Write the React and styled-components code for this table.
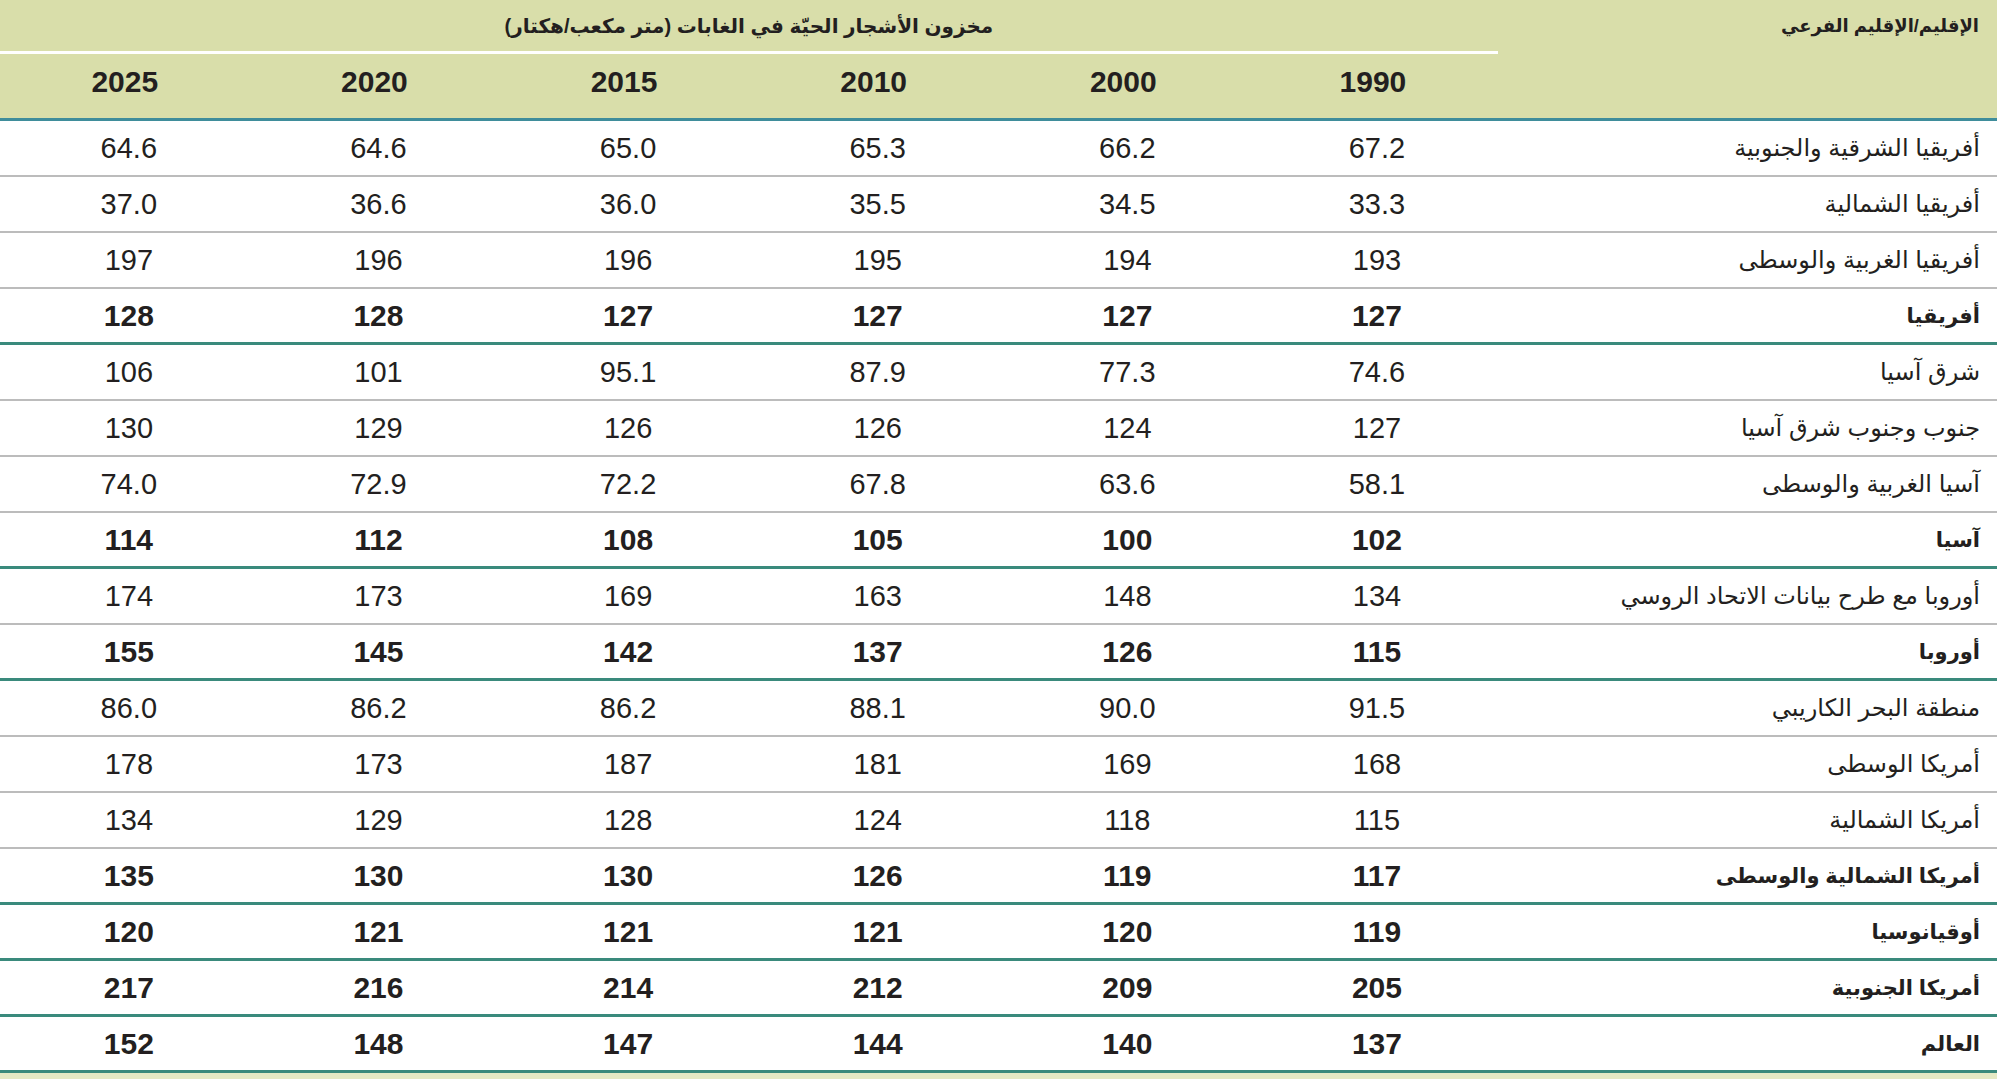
import React from 'react';
import styled, { createGlobalStyle } from 'styled-components';

const GlobalStyle = createGlobalStyle`
  html, body {
    margin: 0;
    padding: 0;
    background: #ffffff;
  }
  body {
    font-family: "Liberation Sans", "DejaVu Sans", Arial, sans-serif;
    color: #231f20;
    overflow: hidden;
  }
`;

const cols = '2fr repeat(6, 1fr)';

const Page = styled.div`
  width: 1997px;
  height: 1079px;
  display: flex;
  flex-direction: column;
  direction: rtl;
  background: #e4e9c4;
`;

const Head = styled.div`
  display: grid;
  grid-template-columns: ${cols};
  grid-template-rows: 54px 64px;
  background: #d9deaa;
  border-bottom: 3px solid #3f8d9b;
`;

const RegionTitle = styled.div`
  grid-row: 1;
  grid-column: 1;
  display: flex;
  align-items: center;
  padding-right: 18px;
  padding-bottom: 3px;
  font-size: 18px;
  font-weight: bold;
`;

const GroupTitle = styled.div`
  grid-row: 1;
  grid-column: 2 / span 6;
  display: flex;
  align-items: center;
  justify-content: center;
  border-bottom: 3px solid #ffffff;
  font-size: 20px;
  font-weight: bold;
`;

const Year = styled.div`
  grid-row: 2;
  display: flex;
  align-items: center;
  justify-content: center;
  padding-bottom: 8px;
  font-size: 30px;
  font-weight: bold;
`;

const Body = styled.div`
  display: flex;
  flex-direction: column;
  background: #ffffff;
`;

const Row = styled.div`
  display: grid;
  grid-template-columns: ${cols};
  height: 56px;
  box-sizing: border-box;
  border-bottom: ${p => (p.total ? '3px solid #3a8a7c' : '2px solid #bcbcbc')};
  font-weight: ${p => (p.total ? 'bold' : 'normal')};
`;

const Region = styled.div`
  display: flex;
  align-items: center;
  padding-right: 17px;
  font-size: ${p => (p.total ? '21px' : '24px')};
`;

const Value = styled.div`
  display: flex;
  align-items: center;
  justify-content: center;
  padding-left: 8px;
  font-size: ${p => (p.total ? '30px' : '29px')};
`;

const years = ['1990', '2000', '2010', '2015', '2020', '2025'];

const rows = [
  ['أفريقيا الشرقية والجنوبية', ['67.2', '66.2', '65.3', '65.0', '64.6', '64.6']],
  ['أفريقيا الشمالية', ['33.3', '34.5', '35.5', '36.0', '36.6', '37.0']],
  ['أفريقيا الغربية والوسطى', ['193', '194', '195', '196', '196', '197']],
  ['أفريقيا', ['127', '127', '127', '127', '128', '128'], true],
  ['شرق آسيا', ['74.6', '77.3', '87.9', '95.1', '101', '106']],
  ['جنوب وجنوب شرق آسيا', ['127', '124', '126', '126', '129', '130']],
  ['آسيا الغربية والوسطى', ['58.1', '63.6', '67.8', '72.2', '72.9', '74.0']],
  ['آسيا', ['102', '100', '105', '108', '112', '114'], true],
  ['أوروبا مع طرح بيانات الاتحاد الروسي', ['134', '148', '163', '169', '173', '174']],
  ['أوروبا', ['115', '126', '137', '142', '145', '155'], true],
  ['منطقة البحر الكاريبي', ['91.5', '90.0', '88.1', '86.2', '86.2', '86.0']],
  ['أمريكا الوسطى', ['168', '169', '181', '187', '173', '178']],
  ['أمريكا الشمالية', ['115', '118', '124', '128', '129', '134']],
  ['أمريكا الشمالية والوسطى', ['117', '119', '126', '130', '130', '135'], true],
  ['أوقيانوسيا', ['119', '120', '121', '121', '121', '120'], true],
  ['أمريكا الجنوبية', ['205', '209', '212', '214', '216', '217'], true],
  ['العالم', ['137', '140', '144', '147', '148', '152'], true],
];

export default function App() {
  return (
    <Page lang="ar">
      <GlobalStyle />
      <Head>
        <RegionTitle>الإقليم/الإقليم الفرعي</RegionTitle>
        <GroupTitle>مخزون الأشجار الحيّة في الغابات (متر مكعب/هكتار)</GroupTitle>
        <div style={{ gridRow: 2, gridColumn: 1 }} />
        {years.map(y => (
          <Year key={y}>{y}</Year>
        ))}
      </Head>
      <Body>
        {rows.map(([name, vals, total]) => (
          <Row key={name} total={total}>
            <Region total={total}>{name}</Region>
            {vals.map((v, i) => (
              <Value key={i} total={total}>{v}</Value>
            ))}
          </Row>
        ))}
      </Body>
    </Page>
  );
}
